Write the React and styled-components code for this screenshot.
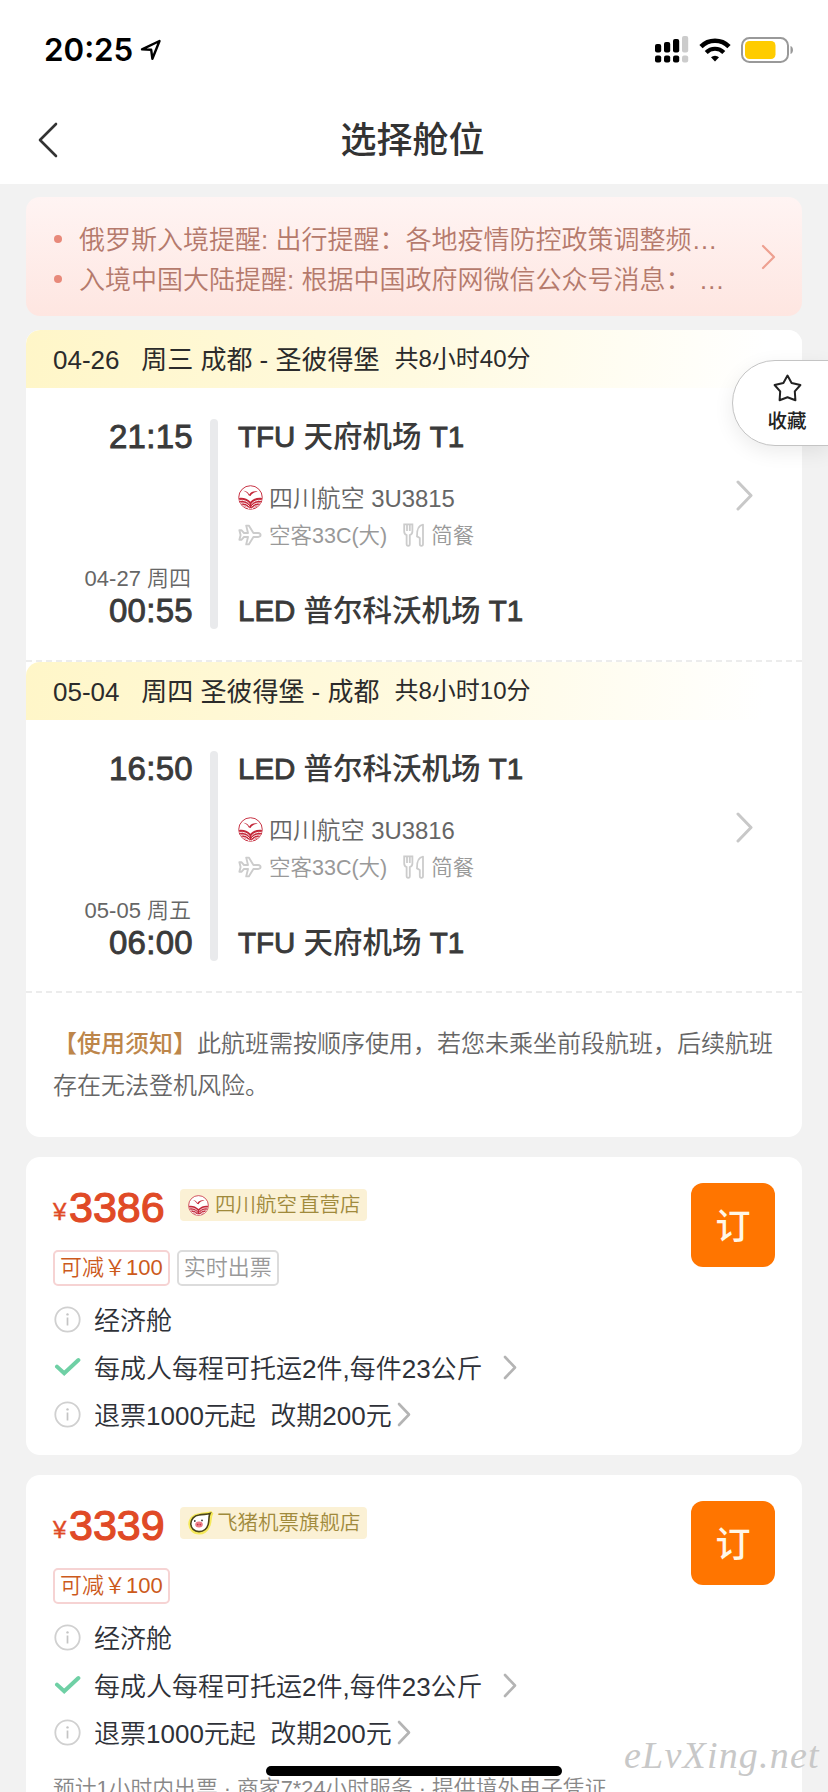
import React from 'react';
import styled, { createGlobalStyle } from 'styled-components';

const GlobalStyle = createGlobalStyle`
  * {
    box-sizing: border-box;
  }
  body {
    margin: 0;
    background: #f2f2f2;
    font-family: "Liberation Sans", "Noto Sans CJK SC", sans-serif;
  }
`;

// Page
const Page = styled.div`
  position: relative;
  width: 828px;
  height: 1792px;
  overflow: hidden;
  background: #f2f2f2;
  color: #333;
`;

const StatusBar = styled.div`
  display: flex;
  align-items: center;
  justify-content: space-between;
  height: 96px;
  padding: 3px 34px 0 44px;
  background: #fff;
`;

const Clock = styled.div`
  display: flex;
  align-items: center;
  gap: 7px;
  font-family: Inter, "Liberation Sans", sans-serif;
  font-size: 31.3px;
  font-weight: 600;
  color: #000;
`;

const StatusIcons = styled.div`
  display: flex;
  align-items: center;
  gap: 10px;
`;

const NavBar = styled.header`
  display: grid;
  grid-template-columns: 100px 1fr 100px;
  align-items: center;
  height: 88px;
  background: #fff;
`;

const BackButton = styled.button`
  display: flex;
  align-items: center;
  padding: 0 0 0 38px;
  border: none;
  background: none;
`;

const NavTitle = styled.h1`
  margin: 0;
  padding: 1px 3px 0 0;
  text-align: center;
  font-size: 36px;
  font-weight: 500;
  line-height: 44px;
`;

const Content = styled.main`
  display: flex;
  flex-direction: column;
  padding: 13px 26px 0;
`;

// Travel notice
const Notice = styled.section`
  display: flex;
  align-items: center;
  justify-content: space-between;
  height: 119px;
  margin-bottom: 14px;
  padding: 0 26px 0 28px;
  border-radius: 14px;
  background: linear-gradient(#fff4f3, #fee6e1);
`;

const NoticeList = styled.ul`
  margin: 0;
  padding: 1px 0 0;
  list-style: none;
`;

const NoticeItem = styled.li`
  display: flex;
  align-items: center;
  gap: 17px;
  height: 40px;
  font-size: 26px;
  font-weight: 350;
  color: #b57a6c;
  white-space: pre;

  &::before {
    content: "";
    width: 8px;
    height: 8px;
    margin-top: 3px;
    border-radius: 50%;
    background: #e8897a;
  }
`;

// Cards
const Card = styled.section`
  display: flex;
  flex-direction: column;
  margin-bottom: 20px;
  border-radius: 14px;
  background: #fff;
  overflow: hidden;
`;

const Leg = styled.article`
  height: ${(props) => props.$height}px;
  border-bottom: 2px dashed #ececec;
`;

const LegHeader = styled.div`
  display: flex;
  align-items: center;
  height: 58px;
  padding: 0 27px 3px;
  border-top-left-radius: 14px;
  background: linear-gradient(95deg, #fff6c8 0%, #fffae0 50%, #fff 95%);
  font-size: 26px;
  color: #2b2b2b;
  white-space: pre;
`;

const Duration = styled.span`
  margin: -2px 0 0 15px;
  font-size: 24px;
`;

const LegBody = styled.div`
  display: flex;
  height: 272px;
  padding: 31px 49px 0 27px;
`;

const Times = styled.div`
  display: flex;
  flex-direction: column;
  justify-content: space-between;
  align-items: flex-end;
  width: 140px;
  height: 210px;
`;

const Time = styled.div`
  font-size: 33px;
  line-height: 36px;
  letter-spacing: 0.3px;
  text-align: right;
  color: #3a3a3a;
  -webkit-text-stroke: 0.9px #3a3a3a;
`;

const ArrivalDate = styled.div`
  padding-right: 2px;
  font-size: 22px;
  font-weight: 350;
  line-height: 28px;
  color: #666;
`;

const Track = styled.div`
  width: 8px;
  height: 210px;
  margin: 0 20px 0 17px;
  border-radius: 4px;
  background: #e9eaec;
`;

const Stops = styled.div`
  display: flex;
  flex: 1;
  flex-direction: column;
  height: 210px;
`;

const Airport = styled.div`
  font-size: 29.5px;
  font-weight: 500;
  line-height: 36px;
  color: #3a3a3a;
  white-space: nowrap;

  b {
    font-weight: 400;
    -webkit-text-stroke: 0.9px #3a3a3a;
  }
`;

const FlightInfo = styled.div`
  display: flex;
  flex-direction: column;
  flex: 1;
  padding-top: 22px;
`;

const InfoLine = styled.div`
  display: flex;
  align-items: center;
  height: ${(props) => (props.$muted ? 37 : 38)}px;
  font-size: ${(props) => (props.$muted ? 21.5 : 23.9)}px;
  font-weight: 350;
  color: ${(props) => (props.$muted ? '#999' : '#666')};

  svg {
    margin: 2px 6px 0 0;
  }
`;

const Meal = styled.span`
  display: flex;
  align-items: center;
  margin-left: 16px;
`;

const LegArrow = styled.div`
  padding-top: 61px;
`;

const Rule = styled.p`
  height: 144px;
  margin: 0;
  padding: 30px 27px 0;
  font-size: 24px;
  font-weight: 350;
  line-height: 42px;
  color: #666;

  strong {
    font-weight: 500;
    color: #bd864a;
  }
`;

// Offers
const OfferCard = styled(Card)`
  flex-direction: row;
  justify-content: space-between;
  align-items: flex-start;
  height: ${(props) => props.$height}px;
  padding: 26px 27px 0;
`;

const OfferBody = styled.div`
  display: flex;
  flex-direction: column;
`;

const PriceRow = styled.div`
  display: flex;
  align-items: center;
  height: 44px;
  white-space: nowrap;
`;

const Price = styled.div`
  display: flex;
  align-items: baseline;
  gap: 4px;
  width: 127px;
  padding-top: 7px;
  color: #e04a26;
  font-size: 43px;
  line-height: 44px;
  -webkit-text-stroke: 1.2px #e04a26;

  small {
    margin-bottom: 3px;
    font-size: 24px;
    line-height: 30px;
    width: 12px;
    -webkit-text-stroke-width: 0.4px;
    transform: translateY(-2px);
  }
`;

const Shop = styled.div`
  display: flex;
  align-items: center;
  width: 187px;
  height: 32px;
  padding-left: 8px;
  border-radius: 4px;
  background: #fbf1d5;
  font-size: 20.5px;
  font-weight: 350;
  line-height: 28px;
  color: #a08a3c;
`;

const ShopName = styled.span`
  display: flex;
  gap: 2px;
  margin-left: ${(props) => props.$offset}px;
`;

const TagRow = styled.div`
  display: flex;
  gap: 7px;
  margin-top: 23px;
`;

const Tag = styled.span`
  display: flex;
  align-items: center;
  height: 36px;
  padding: 0 5px;
  border: 2px solid ${(props) => (props.$discount ? '#f6d3d3' : '#dcdcdc')};
  border-radius: 5px;
  font-size: 22px;
  font-weight: 350;
  line-height: 30px;
  color: ${(props) => (props.$discount ? '#cc5a1c' : '#999')};
`;

const PerkList = styled.div`
  display: flex;
  flex-direction: column;
  margin-top: 9px;
`;

const Perk = styled.div`
  display: flex;
  align-items: center;
  height: 47.6px;
  font-size: 26px;
  font-weight: 350;
  color: #2e3138;
  white-space: pre;
`;

const PerkIcon = styled.span`
  display: flex;
  width: 41px;
  padding: 2px 0 0 1px;
`;

const PerkArrow = styled.span`
  display: flex;
  margin-left: ${(props) => props.$gap}px;
  padding-top: 2px;
`;

const BookButton = styled.button`
  width: 84px;
  height: 84px;
  padding: 0 0 4px;
  border: none;
  border-radius: 12px;
  background: #ff7500;
  font-family: inherit;
  font-size: 35px;
  font-weight: 500;
  color: #fff7e8;
`;

const Footnote = styled.div`
  margin-top: 17px;
  font-size: 21.8px;
  font-weight: 350;
  line-height: 32px;
  color: #888;
  white-space: nowrap;
`;

// Overlays
const Favorite = styled.button`
  position: absolute;
  top: 360px;
  right: -2px;
  display: flex;
  flex-direction: column;
  align-items: center;
  gap: 5px;
  width: 98px;
  height: 86px;
  padding: 13px 0 0 12px;
  border: 1px solid #c4c4c4;
  border-radius: 43px 0 0 43px;
  background: #fff;
  box-shadow: 0 6px 20px rgba(0, 0, 0, 0.08);
  font-family: inherit;
  font-size: 19.5px;
  font-weight: 500;
  line-height: 28px;
  color: #222;
`;

const HomeIndicator = styled.div`
  position: absolute;
  left: 266px;
  top: 1766px;
  width: 296px;
  height: 10px;
  border-radius: 5px;
  background: #000;
`;

const Watermark = styled.div`
  position: absolute;
  left: 624px;
  top: 1731px;
  font-family: "Liberation Serif", cursive;
  font-size: 38px;
  font-style: italic;
  line-height: 48px;
  letter-spacing: 1.2px;
  color: #c8c8c8;
`;

// Icons
const Chevron = ({ width, height, color, stroke, left }) => (
  <svg width={width} height={height} viewBox={`0 0 ${width} ${height}`} fill="none">
    <path
      d={
        left
          ? `M${width - 2} 2L2 ${height / 2}L${width - 2} ${height - 2}`
          : `M2 2L${width - 2} ${height / 2}L2 ${height - 2}`
      }
      stroke={color}
      strokeWidth={stroke}
      strokeLinecap="round"
      strokeLinejoin="round"
    />
  </svg>
);

const LocationIcon = () => (
  <svg width="22" height="22" viewBox="0 0 22 22" fill="none">
    <path
      d="M2 10.4L19.5 2L12.4 19.8L11.2 10.8Z"
      stroke="#000"
      strokeWidth="2.4"
      strokeLinejoin="round"
    />
  </svg>
);

const SignalIcon = () => (
  <svg width="34" height="27" viewBox="0 0 34 27">
    <rect x="0" y="8" width="6.2" height="8.4" rx="2" />
    <rect x="9" y="6" width="6.2" height="10.4" rx="2" />
    <rect x="18" y="3" width="6.2" height="13.4" rx="2" />
    <rect x="27" y="0" width="6.2" height="16.4" rx="2" fill="#ccc" />
    <rect x="0" y="19.4" width="6.2" height="7" rx="2" />
    <rect x="9" y="19.4" width="6.2" height="7" rx="2" />
    <rect x="18" y="19.4" width="6.2" height="7" rx="2" />
    <rect x="27" y="19.4" width="6.2" height="7" rx="2" fill="#ccc" />
  </svg>
);

const WifiIcon = () => (
  <svg width="32" height="24" viewBox="0 0 32 24" fill="none">
    <path d="M2 8.6A19.8 19.8 0 0 1 30 8.6" stroke="#000" strokeWidth="4.6" />
    <path d="M7.2 14.4A12.4 12.4 0 0 1 24.8 14.4" stroke="#000" strokeWidth="4.2" />
    <path d="M16 23.5L12 19.3A5.8 5.8 0 0 1 20 19.3Z" fill="#000" />
  </svg>
);

const BatteryIcon = () => (
  <svg width="53" height="26" viewBox="0 0 53 26" fill="none">
    <rect x="1" y="1" width="46" height="24" rx="7.5" stroke="#999" strokeWidth="2" />
    <rect x="4" y="4" width="30.5" height="18" rx="4.5" fill="#fc0" />
    <path d="M49.5 9C52.8 10 52.8 16 49.5 17Z" fill="#999" />
  </svg>
);

const SichuanLogo = ({ size }) => (
  <svg width={size} height={size} viewBox="0 0 24 24" fill="none">
    <circle cx="12" cy="12" r="11.3" fill="#fff" stroke="#c4283a" strokeWidth="0.9" />
    <path
      d="M0.9 12.4C5 11.6 9 13 12 16C15 13 19 11.6 23.1 12.4A11.2 11.2 0 0 1 0.9 12.4Z"
      fill="#c4283a"
    />
    <path
      d="M1.4 14.8C5.6 14.2 9 15.6 11.2 18.4M2.4 17.4C6 16.8 9 18 11 20.6M4.4 20C7 19.4 9 20.6 10.4 23M22.6 14.8C18.4 14.2 15 15.6 12.8 18.4M21.6 17.4C18 16.8 15 18 13 20.6M19.6 20C17 19.4 15 20.6 13.6 23"
      stroke="#fff"
      strokeWidth="0.9"
    />
    <path
      d="M5 5.6C7.8 5.8 9.4 6.8 10.8 9C12.6 6.4 15.6 5.4 19 6.4C15.6 6.8 13.4 8 12 10.6L10.4 10C9.2 7.6 7.6 6.4 5 5.6Z"
      fill="#c4283a"
    />
  </svg>
);

const PigLogo = () => (
  <svg width="26" height="24" viewBox="0 0 26 24">
    <path
      d="M11 4C15 2.5 20 3.6 24 1.6C21.6 5 22.6 9 21 14C19 20 14.5 22 11 21.8C5.5 21.6 2 17.5 2 13C2 8 6 4.4 11 4Z"
      fill="#fff"
      stroke="#f5e95a"
      strokeWidth="3.4"
    />
    <path
      d="M11 4C15 2.8 18.6 4 22 2.6C20.4 5.6 21.4 9 20.2 13.4C18.8 18.4 15 20.6 11 20.6C6.4 20.6 2.8 17.2 2.8 12.8C2.8 8 6.4 4.6 11 4Z"
      fill="#fff"
      stroke="#4a4418"
      strokeWidth="1.6"
    />
    <ellipse cx="11" cy="13.6" rx="3.8" ry="3" fill="#ee7a85" />
    <circle cx="6.8" cy="10" r="0.9" fill="#333" />
    <circle cx="14" cy="9.4" r="0.9" fill="#333" />
    <circle cx="9.7" cy="13.6" r="0.8" fill="#b03a4a" />
    <circle cx="12.3" cy="13.6" r="0.8" fill="#b03a4a" />
  </svg>
);

const PlaneIcon = () => (
  <svg width="25" height="22" viewBox="0 0 25 22" fill="none">
    <path
      d="M1.4 6.2H3.4L6 9H10L8.2 1.6H10.8L15.4 9H20C23.4 9.4 23.4 12.6 20 13H15.4L10.8 20.4H8.2L10 13H6L3.4 15.8H1.4L2.6 11Z"
      stroke="#ccc"
      strokeWidth="1.9"
      strokeLinejoin="round"
    />
  </svg>
);

const MealIcon = () => (
  <svg width="22" height="24" viewBox="0 0 22 24" fill="none">
    <path
      d="M1.2 1.4H9.4V8.4C9.4 10.4 8.4 11.4 6.8 12V21Q6.8 22.8 5.2 22.8T3.6 21V12C2.2 11.4 1.2 10.4 1.2 8.4ZM4 1.6V8M6.8 1.6V8"
      stroke="#ccc"
      strokeWidth="1.8"
    />
    <path
      d="M20 1.6V21Q20 22.8 18.4 22.8T16.8 21V15L14 13.4C13.8 7.4 15.4 2.2 20 1.6Z"
      stroke="#ccc"
      strokeWidth="1.8"
      strokeLinejoin="round"
    />
  </svg>
);

const InfoIcon = () => (
  <svg width="27" height="27" viewBox="0 0 27 27" fill="none">
    <circle cx="13.5" cy="13.5" r="12.2" stroke="#d0d0d0" strokeWidth="1.8" />
    <circle cx="13.5" cy="8.4" r="1.2" fill="#c4c4c4" />
    <path d="M13.5 11.5V19.5" stroke="#c4c4c4" strokeWidth="1.7" />
  </svg>
);

const CheckIcon = () => (
  <svg width="27" height="20" viewBox="0 0 27 20" fill="none">
    <path d="M3 9.6L10.2 16.2L24.4 3" stroke="#6fd0a5" strokeWidth="4" strokeLinecap="round" />
  </svg>
);

const StarIcon = () => (
  <svg width="29" height="28" viewBox="0 0 29 28" fill="none">
    <path
      d="M14.5 1.6L18.6 9L27.4 11L21.8 17.4L22.4 26.2L14.5 23.2L6.6 26.2L7.2 17.4L1.6 11L10.4 9Z"
      stroke="#222"
      strokeWidth="2"
      strokeLinejoin="round"
    />
  </svg>
);

// Data
const notices = [
  '俄罗斯入境提醒: 出行提醒：各地疫情防控政策调整频…',
  '入境中国大陆提醒: 根据中国政府网微信公众号消息： …',
];

const TFU = ['TFU', '天府机场', 'T1'];
const LED = ['LED', '普尔科沃机场', 'T1'];

const legs = [
  {
    title: '04-26   周三 成都 - 圣彼得堡',
    duration: '共8小时40分',
    depart: '21:15',
    from: TFU,
    flight: '四川航空 3U3815',
    arriveDate: '04-27 周四',
    arrive: '00:55',
    to: LED,
    height: 332,
  },
  {
    title: '05-04   周四 圣彼得堡 - 成都',
    duration: '共8小时10分',
    depart: '16:50',
    from: LED,
    flight: '四川航空 3U3816',
    arriveDate: '05-05 周五',
    arrive: '06:00',
    to: TFU,
    height: 331,
  },
];

const offers = [
  {
    price: 3386,
    logo: <SichuanLogo size={21} />,
    shop: ['四川航空', '直营店'],
    offset: 6,
    tags: ['实时出票'],
    height: 298,
  },
  {
    price: 3339,
    logo: <PigLogo />,
    shop: ['飞猪机票旗舰店'],
    offset: 3,
    tags: [],
    footnote: '预计1小时内出票 · 商家7*24小时服务 · 提供境外电子凭证',
    height: 360,
  },
];

const AirportName = ({ parts: [code, name, terminal] }) => (
  <Airport>
    <b>{code}</b> {name} <b>{terminal}</b>
  </Airport>
);

const FlightLeg = ({ leg }) => (
  <Leg $height={leg.height}>
    <LegHeader>
      {leg.title}
      <Duration>{leg.duration}</Duration>
    </LegHeader>
    <LegBody>
      <Times>
        <Time>{leg.depart}</Time>
        <div>
          <ArrivalDate>{leg.arriveDate}</ArrivalDate>
          <Time>{leg.arrive}</Time>
        </div>
      </Times>
      <Track />
      <Stops>
        <AirportName parts={leg.from} />
        <FlightInfo>
          <InfoLine>
            <SichuanLogo size={25} />
            {leg.flight}
          </InfoLine>
          <InfoLine $muted>
            <PlaneIcon />
            空客33C(大)
            <Meal>
              <MealIcon />
              简餐
            </Meal>
          </InfoLine>
        </FlightInfo>
        <AirportName parts={leg.to} />
      </Stops>
      <LegArrow>
        <Chevron width={17} height={31} color="#c8c8c8" stroke={3} />
      </LegArrow>
    </LegBody>
  </Leg>
);

const Offer = ({ offer }) => (
  <OfferCard $height={offer.height}>
    <OfferBody>
      <PriceRow>
        <Price>
          <small>¥</small>
          {offer.price}
        </Price>
        <Shop>
          {offer.logo}
          <ShopName $offset={offer.offset}>
            {offer.shop.map((part) => (
              <span key={part}>{part}</span>
            ))}
          </ShopName>
        </Shop>
      </PriceRow>
      <TagRow>
        <Tag $discount>可减￥100</Tag>
        {offer.tags.map((tag) => (
          <Tag key={tag}>{tag}</Tag>
        ))}
      </TagRow>
      <PerkList>
        <Perk>
          <PerkIcon>
            <InfoIcon />
          </PerkIcon>
          经济舱
        </Perk>
        <Perk>
          <PerkIcon>
            <CheckIcon />
          </PerkIcon>
          每成人每程可托运2件,每件23公斤
          <PerkArrow $gap={20}>
            <Chevron width={14} height={25} color="#b4b4b4" stroke={2.6} />
          </PerkArrow>
        </Perk>
        <Perk>
          <PerkIcon>
            <InfoIcon />
          </PerkIcon>
          {'退票1000元起  改期200元'}
          <PerkArrow $gap={5}>
            <Chevron width={14} height={25} color="#b4b4b4" stroke={2.6} />
          </PerkArrow>
        </Perk>
      </PerkList>
      {offer.footnote && <Footnote>{offer.footnote}</Footnote>}
    </OfferBody>
    <BookButton>订</BookButton>
  </OfferCard>
);

const App = () => {
  return (
    <>
      <GlobalStyle />
      <Page>
        <StatusBar>
          <Clock>
            20:25
            <LocationIcon />
          </Clock>
          <StatusIcons>
            <SignalIcon />
            <WifiIcon />
            <BatteryIcon />
          </StatusIcons>
        </StatusBar>
        <NavBar>
          <BackButton>
            <Chevron width={20} height={36} color="#333" stroke={2.6} left />
          </BackButton>
          <NavTitle>选择舱位</NavTitle>
        </NavBar>
        <Content>
          <Notice>
            <NoticeList>
              {notices.map((text) => (
                <NoticeItem key={text}>{text}</NoticeItem>
              ))}
            </NoticeList>
            <Chevron width={15} height={26} color="#eea091" stroke={2.2} />
          </Notice>
          <Card>
            {legs.map((leg) => (
              <FlightLeg key={leg.title} leg={leg} />
            ))}
            <Rule>
              <strong>【使用须知】</strong>
              此航班需按顺序使用，若您未乘坐前段航班，后续航班存在无法登机风险。
            </Rule>
          </Card>
          {offers.map((offer) => (
            <Offer key={offer.price} offer={offer} />
          ))}
        </Content>
        <Favorite>
          <StarIcon />
          收藏
        </Favorite>
        <HomeIndicator />
        <Watermark>eLvXing.net</Watermark>
      </Page>
    </>
  );
};

export default App;
